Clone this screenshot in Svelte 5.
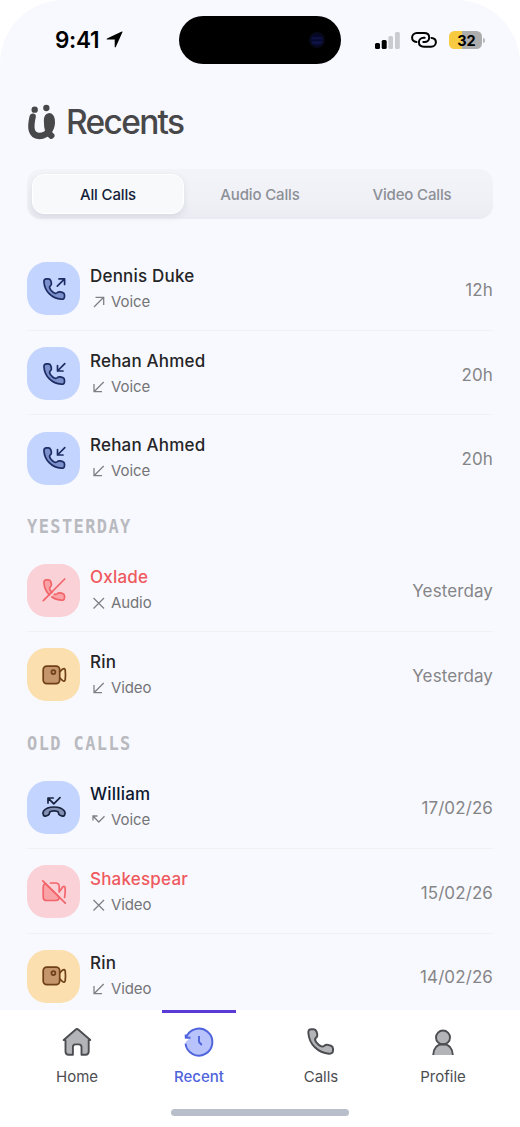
<script>
    const tabs = ["All Calls", "Audio Calls", "Video Calls"];
    let activeTab = $state("All Calls");

    const groups = [
        {
            title: "",
            calls: [
                { name: "Dennis Duke", type: "Voice", kind: "out", time: "12h" },
                { name: "Rehan Ahmed", type: "Voice", kind: "in", time: "20h" },
                { name: "Rehan Ahmed", type: "Voice", kind: "in", time: "20h" }
            ]
        },
        {
            title: "YESTERDAY",
            calls: [
                { name: "Oxlade", type: "Audio", kind: "declined", time: "Yesterday" },
                { name: "Rin", type: "Video", kind: "video", time: "Yesterday" }
            ]
        },
        {
            title: "OLD CALLS",
            calls: [
                { name: "William", type: "Voice", kind: "missed", time: "17/02/26" },
                { name: "Shakespear", type: "Video", kind: "video-off", time: "15/02/26" },
                { name: "Rin", type: "Video", kind: "video", time: "14/02/26" }
            ]
        }
    ];

    // Small status glyph in front of the call type
    const marks = {
        out: "M2 12L11.7 2.3M3.5 2.3H11.7V10",
        in: "M11.7 2L2 11.7M2 4V11.7H10",
        video: "M11.7 2L2 11.7M2 4V11.7H10",
        declined: "M1.5 2L12 12.5M12 2L1.5 12.5",
        "video-off": "M1.5 2L12 12.5M12 2L1.5 12.5",
        missed: "M1 7.5V3H5.5M1 3L6.8 9L12.5 3.3"
    };

    const handset = "M2 5.2C1.7 3 2.6 1.8 4.6 1.8H6.3C7.6 1.8 8.3 2.5 8.7 3.6L9.4 6C9.8 7.6 9 8.4 8.1 9.2C7.2 10 7.6 11.4 8.6 12.8C9.8 14.4 11.4 15.7 12.8 16.2C14 16.6 14.8 16.2 15.5 15.5C16.3 14.8 17.2 14.6 18.4 14.9L20.8 15.6C22 16 22.5 16.7 22.5 17.9V19.6C22.5 21.6 21.3 22.4 19.2 22.2C10 21.6 2.7 14.4 2 5.2Z";

    const navItems = ["Home", "Recent", "Calls", "Profile"];
    let activeNav = $state("Recent");
</script>

<div class="phone">
    <header class="status">
        <div class="clock">
            <span>9:41</span>
            <svg width="17" height="17" viewBox="0 0 17 17"><path d="M15.8 .5Q16.8 .2 16.4 1.3L9.8 16Q8.8 17 8.7 15.7V8.6H1.2Q-.2 8.3 1 7.4Z" /></svg>
        </div>
        <div class="island"><i></i></div>
        <div class="indicators">
            <svg width="25" height="17" viewBox="0 0 25 17">
                <rect x="0" y="11" width="5" height="6" rx="1.5" />
                <rect x="6.7" y="8" width="5" height="9" rx="1.5" />
                <rect x="13.4" y="4" width="4.6" height="13" rx="1.5" fill="#c9cbd0" />
                <rect x="20" y="0" width="4.8" height="17" rx="1.5" fill="#c9cbd0" />
            </svg>
            <svg class="link" width="26" height="16" viewBox="0 0 26 16">
                <path d="M5.5 10C2.7 9.8 1.1 8.1 1.1 5.6S3 1.1 6 1.1H13C16.3 1.1 18.2 3 18.2 5.5S16.3 10 13.5 10H12.3" />
                <path d="M20.5 5.9C23.3 6.1 24.9 7.7 24.9 10.2S23 14.7 20 14.7H13C9.8 14.7 7.9 12.8 7.9 10.3S9.8 5.8 12.6 5.8H13.7" />
            </svg>
            <div class="battery"><b>32</b></div>
        </div>
    </header>

    <div class="title">
        <svg width="28" height="36" viewBox="84 310 84 106">
            <circle cx="104" cy="326" r="9.5" />
            <circle cx="139" cy="321" r="9.5" />
            <path d="M98 347C91 378 91 404 118 405C146 405 158 378 155 356C153 341 141 343 141 359C141 381 145 397 154 404" />
        </svg>
        <h1>Recents</h1>
    </div>

    <div class="tabs">
        {#each tabs as tab}
            <button class:active={tab === activeTab} onclick={() => (activeTab = tab)}>{tab}</button>
        {/each}
    </div>

    <main>
        {#each groups as group}
            {#if group.title}
                <h2>{group.title}</h2>
            {/if}
            <ul>
                {#each group.calls as call}
                    <li class={call.kind}>
                        <div class="tile">
                            <svg width="24" height="24" viewBox="0 0 24 24">
                                {#if call.kind === "out" || call.kind === "in"}
                                    <path class="body" d={handset} />
                                    <path d={call.kind === "out" ? "M15.3 9.2L22.6 1.9M17 1.9H22.6V7.5" : "M22.8 1.7L15.5 9M15.5 3.5V9H21"} />
                                {:else if call.kind === "declined"}
                                    <path class="body" d={handset} />
                                    <path class="gap" d="M2.8 23.9L23.9 2.4" />
                                    <path d="M1.3 22.7L22.7 1" />
                                {:else if call.kind === "missed"}
                                    <path class="body" d="M12 12C17 12 20.5 13.5 22.4 16C23.4 17.5 23.3 19 22.5 20.3C21.9 21.3 21 21.4 20 21L18 20.2C16.8 19.7 16.5 19 16.5 18C16.5 16.9 15.9 16.5 15 16.3C13 15.8 11 15.8 9 16.3C8.1 16.5 7.5 16.9 7.5 18C7.5 19 7.2 19.7 6 20.2L4 21C3 21.4 2.1 21.3 1.5 20.3C.7 19 .6 17.5 1.6 16C3.5 13.5 7 12 12 12Z" />
                                    <path d="M6 8V3H11.2M6.2 3.2L11.8 8.8L18 2.6" />
                                {:else if call.kind === "video"}
                                    <rect class="body" x="1.2" y="3.1" width="16.5" height="17.6" rx="3.6" />
                                    <circle cx="11.4" cy="9.1" r="2" />
                                    <path d="M17.7 8.9L20.5 6.2Q22.7 4.6 23.2 6.9Q23.8 11.8 23.2 16.8Q22.6 19 20.4 17.4L17.7 14.9" />
                                {:else}
                                    <path class="body" d="M3.2 3.5Q1.2 4.5 1.2 7V16.9Q1.2 20.5 4.8 20.5H13.6Q17.2 20.5 17.2 17Z" />
                                    <path d="M8.5 3H13.6Q17.2 3 17.2 6.7V12L20.5 7.2Q22.7 5.5 23.1 7.7Q23.6 12 22.6 17.5" />
                                    <path d="M.8 .8L23.3 23.2" />
                                {/if}
                            </svg>
                        </div>
                        <div class="who">
                            <strong>{call.name}</strong>
                            <span>
                                <svg width="14" height="14" viewBox="0 0 14 14"><path d={marks[call.kind]} /></svg>
                                {call.type}
                            </span>
                        </div>
                        <time>{call.time}</time>
                    </li>
                {/each}
            </ul>
        {/each}
    </main>

    <nav>
        <div class="items">
            {#each navItems as item}
                <button class:active={item === activeNav} onclick={() => (activeNav = item)}>
                    <svg width="30" height="30" viewBox="0 0 30 30">
                        {#if item === "Home"}
                            <path class="body" d="M1.7 13L13.5 2.7Q15 1.5 16.5 2.7L28.3 13L26.7 13.2V24.5Q26.7 27.7 23.5 27.7H19.5V20Q19.5 17.4 16.7 17.4H13.5Q10.9 17.4 10.9 20V27.7H6.7Q3.5 27.7 3.5 24.5V13.2Z" />
                        {:else if item === "Recent"}
                            <path class="body fill-only" d="M15 1.5A13.5 13.5 0 1 1 1.5 15L6 11H2.2A13.5 13.5 0 0 1 15 1.5Z" />
                            <path d="M1.5 16.7A13.5 13.5 0 1 0 2.1 10.8M1.7 7.5V10.7H6.5M15 9V15L17.8 18" />
                        {:else if item === "Calls"}
                            <path class="body" transform="scale(1.2)" stroke-width="1.65" d={handset} />
                        {:else}
                            <path class="fill-only body" d="M5.2 28C5.5 21.5 9 17.3 15 17.3S24.5 21.5 24.8 28Z" />
                            <circle class="body" cx="15" cy="10.5" r="7" />
                            <path d="M5.2 28C5.5 21.5 9 17.3 15 17.3S24.5 21.5 24.8 28" />
                        {/if}
                    </svg>
                    <span>{item}</span>
                </button>
            {/each}
        </div>
        <div class="home-bar"></div>
    </nav>
</div>

<style>
    :global(body) {
        margin: 0;
        background: #fff;
    }

    .phone {
        display: flex;
        flex-direction: column;
        width: 520px;
        height: 1127px;
        overflow: hidden;
        box-sizing: border-box;
        background: #f8f9fe;
        border-radius: 64px 64px 0 0;
        font-family: Inter, sans-serif;
    }

    svg {
        flex: none;
        overflow: visible;
    }

    button {
        border: 0;
        padding: 0;
        background: none;
        font: inherit;
    }

    .status {
        display: grid;
        grid-template-columns: 179px 162px 179px;
        align-items: center;
        flex: none;
        height: 80px;
    }

    .clock {
        display: flex;
        align-items: center;
        gap: 7px;
        padding: 0 0 2px 55px;
        font-size: 22.5px;
        font-weight: 600;
        letter-spacing: -0.3px;
    }

    .island {
        display: flex;
        align-items: center;
        justify-content: flex-end;
        height: 48px;
        border-radius: 24px;
        background: #000;
    }

    .island i {
        width: 12px;
        height: 12px;
        margin-right: 16px;
        border: 2px solid #070918;
        border-radius: 50%;
        background: linear-gradient(#05072a 20%, #11164a 35%, #040628 50%, #11164a 70%, #040628);
    }

    .indicators {
        display: flex;
        align-items: center;
        padding-left: 34px;
    }

    .link {
        margin: 0 12px 0 11px;
        fill: none;
        stroke: #000;
        stroke-width: 2;
        stroke-linecap: round;
    }

    .battery {
        position: relative;
        width: 33px;
        height: 18px;
        border-radius: 5.5px;
        background: linear-gradient(90deg, #f8ca42 40%, #adadad 40%);
        font-size: 14.5px;
        line-height: 19px;
        text-align: center;
    }

    .battery b {
        padding-left: 2px;
    }

    .battery::after {
        content: "";
        position: absolute;
        right: -3px;
        top: 7px;
        width: 2px;
        height: 5px;
        border-radius: 0 2px 2px 0;
        background: #b8b8bb;
    }

    .title {
        display: flex;
        align-items: center;
        gap: 10px;
        flex: none;
        height: 83px;
        padding-left: 28px;
        color: #48484a;
    }

    .title svg {
        fill: #48484a;
    }

    .title path {
        fill: none;
        stroke: #48484a;
        stroke-width: 19;
        stroke-linecap: round;
    }

    h1 {
        margin: 0;
        font-size: 33.5px;
        font-weight: 500;
        line-height: 40px;
        letter-spacing: -1.7px;
    }

    .tabs {
        display: grid;
        grid-template-columns: repeat(3, 1fr);
        flex: none;
        height: 40px;
        margin: 6px 27px 0;
        padding: 5px;
        border-radius: 14px;
        background: linear-gradient(#f3f4f8, #eff1f6 60%, #ebecf3);
    }

    .tabs button {
        border-radius: 12px;
        color: #8d8f96;
        font-size: 15px;
        font-weight: 500;
        letter-spacing: -0.15px;
    }

    .tabs .active {
        border: 1px solid #fff;
        background: #f7f9fb;
        color: #14213a;
        box-shadow: 0 3px 7px rgba(40, 45, 80, 0.1);
    }

    main {
        flex: 1;
        min-height: 0;
        overflow: hidden;
        padding: 27px 27px 0;
    }

    h2 {
        margin: 0;
        height: 47.4px;
        color: #b9babf;
        font-family: "DejaVu Sans Mono", monospace;
        font-size: 17px;
        font-weight: 700;
        line-height: 52px;
        letter-spacing: 1.4px;
        transform: scaleY(1.14);
    }

    ul {
        margin: 0;
        padding: 0;
        list-style: none;
    }

    li {
        display: flex;
        align-items: center;
        box-sizing: border-box;
        height: 84.7px;
        padding-top: 2px;
        border-bottom: 1.5px solid #f0f1f3;
        --ink: #1d2c63;
        --fill: #7c90cc;
        --tile: #c3d4ff;
    }

    li:last-child {
        border-color: transparent;
    }

    .tile {
        display: flex;
        align-items: center;
        justify-content: center;
        flex: none;
        width: 53px;
        height: 53px;
        border-radius: 19.5px;
        background: var(--tile);
    }

    .tile svg {
        fill: none;
        stroke: var(--ink);
        stroke-width: 1.7;
        stroke-linecap: round;
        stroke-linejoin: round;
    }

    .tile .body {
        fill: var(--fill);
    }

    .tile .gap {
        stroke: var(--tile);
    }

    .missed {
        --ink: #17223e;
        --fill: #8290b4;
    }

    .declined,
    .video-off {
        --ink: #f2656b;
        --fill: #faa3a6;
        --tile: #f9d1d6;
    }

    .video {
        --ink: #70401a;
        --fill: #c5956b;
        --tile: #fbdfae;
    }

    .who {
        display: flex;
        flex-direction: column;
        flex: 1;
        gap: 4px;
        padding-left: 10px;
    }

    .who strong {
        color: #252527;
        font-size: 17px;
        font-weight: 500;
        line-height: 22px;
        letter-spacing: 0.2px;
    }

    .missed strong {
        color: #0d1730;
    }

    .declined strong,
    .video-off strong {
        color: #ef5a60;
    }

    .who span {
        display: flex;
        align-items: center;
        gap: 5px;
        padding-left: 2px;
        color: #747477;
        font-size: 15px;
        line-height: 22px;
        letter-spacing: -0.1px;
    }

    .who span svg {
        fill: none;
        stroke: #808084;
        stroke-width: 1.3;
    }

    time {
        padding-top: 2px;
        color: #858588;
        font-size: 17px;
        letter-spacing: 0.1px;
    }

    nav {
        flex: none;
        height: 117px;
        background: #fff;
    }

    .items {
        display: grid;
        grid-template-columns: repeat(4, 122px);
        padding: 0 16px;
    }

    .items button {
        display: flex;
        flex-direction: column;
        align-items: center;
        position: relative;
        padding-top: 17px;
        color: #4c4d51;
        font-size: 15px;
        --fill: #b3b4b8;
    }

    .items span {
        margin-top: 9px;
        line-height: 22px;
    }

    .items svg {
        fill: none;
        stroke: currentColor;
        stroke-width: 1.9;
        stroke-linejoin: round;
    }

    .items .body {
        fill: var(--fill);
    }

    .items .fill-only {
        stroke: none;
    }

    .items .active {
        color: #4f63dc;
        --fill: #b9c3fb;
        font-weight: 500;
    }

    .items .active::before {
        content: "";
        position: absolute;
        top: 0;
        left: 23.5px;
        width: 74px;
        height: 3px;
        background: #5a3bd6;
    }

    .home-bar {
        width: 178px;
        height: 7px;
        margin: 21px auto 0;
        border-radius: 4px;
        background: #b8bfca;
    }
</style>
